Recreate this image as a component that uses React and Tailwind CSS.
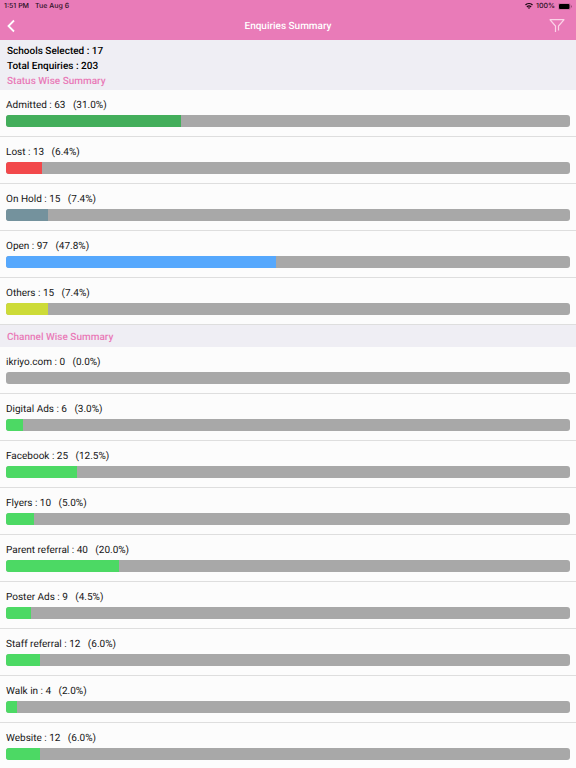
const statuses = [
  { name: 'Admitted', count: 63, percent: '31.0', color: 'bg-[#43ae5b]' },
  { name: 'Lost', count: 13, percent: '6.4', color: 'bg-[#f2484b]' },
  { name: 'On Hold', count: 15, percent: '7.4', color: 'bg-[#74929d]' },
  { name: 'Open', count: 97, percent: '47.8', color: 'bg-[#56a8fd]' },
  { name: 'Others', count: 15, percent: '7.4', color: 'bg-[#cddb38]' },
];

const channels = [
  { name: 'ikriyo.com', count: 0, percent: '0.0' },
  { name: 'Digital Ads', count: 6, percent: '3.0' },
  { name: 'Facebook', count: 25, percent: '12.5' },
  { name: 'Flyers', count: 10, percent: '5.0' },
  { name: 'Parent referral', count: 40, percent: '20.0' },
  { name: 'Poster Ads', count: 9, percent: '4.5' },
  { name: 'Staff referral', count: 12, percent: '6.0' },
  { name: 'Walk in', count: 4, percent: '2.0' },
  { name: 'Website', count: 12, percent: '6.0' },
];

function StatusBar() {
  return (
    <div className="flex h-3 items-center justify-between px-1 font-['Inter',sans-serif] text-[7px] font-medium text-[#2a101e]">
      <div className="flex gap-1.5">
        <span>1:51 PM</span>
        <span>Tue Aug 6</span>
      </div>
      <div className="flex items-center gap-[3px]">
        <svg className="h-[6px] w-2" viewBox="0 0 16 12" fill="none" stroke="#1d0b15" strokeWidth="2.8" aria-hidden="true">
          <path d="M1 4.2a10 10 0 0 1 14 0" />
          <path d="M3.8 7.8a6 6 0 0 1 8.4 0" />
          <path d="M8 12 5.6 9.6a3.4 3.4 0 0 1 4.8 0z" fill="#1d0b15" stroke="none" />
        </svg>
        <span>100%</span>
        <svg className="h-[7px] w-[14px]" viewBox="0 0 28 14" aria-hidden="true">
          <rect x="0.5" y="0.5" width="24" height="13" rx="3.5" fill="none" stroke="#a85a85" />
          <rect x="2" y="2" width="21" height="10" rx="2" fill="#000" />
          <path d="M26 4.5c2 .8 2 4.2 0 5z" fill="#7a3c5d" />
        </svg>
      </div>
    </div>
  );
}

function Row({ name, count, percent, color = 'bg-[#4cd964]' }) {
  return (
    <li className="border-b border-[#dedede] px-1.5 pt-[7px] pb-[9px]">
      <p className="text-[10px] leading-[18px] whitespace-pre">{`${name} : ${count}   (${percent}%)`}</p>
      <div className="h-3 overflow-hidden rounded-[3px] bg-[#a8a8a8]">
        <div className={`h-full ${color}`} style={{ width: `${percent}%` }} />
      </div>
    </li>
  );
}

export default function App() {
  return (
    <div className="h-screen overflow-hidden bg-[#fcfcfc] font-['Roboto',sans-serif] text-[#161616] [text-rendering:geometricPrecision]">
      <header className="bg-[#e97bb8]">
        <StatusBar />
        <div className="grid h-7 grid-cols-[1fr_auto_1fr] items-center px-1.5">
          <button type="button" aria-label="Back" className="justify-self-start">
            <svg className="h-[14px] w-[10px]" viewBox="0 0 10 14" fill="none" stroke="#fff" strokeWidth="1.8" aria-hidden="true">
              <path d="M8 1.5 2.5 7 8 12.5" />
            </svg>
          </button>
          <h1 className="text-[10px] font-medium text-white">Enquiries Summary</h1>
          <button type="button" aria-label="Filter" className="mr-[5px] justify-self-end">
            <svg className="h-[15px] w-4" viewBox="0 0 16 15" fill="none" stroke="#fbd3e8" strokeWidth="1.2" aria-hidden="true">
              <path d="M6.5 13V7L1.2 1V.6h13.6V1L9.5 7v4.5" />
            </svg>
          </button>
        </div>
      </header>
      <main>
        <section className="bg-[#efeef4] px-[7px] pt-1 pb-px text-[10px] leading-[15px] font-medium text-black">
          <p>Schools Selected : 17</p>
          <p>Total Enquiries : 203</p>
          <h2 className="text-[#e97bb8]">Status Wise Summary</h2>
        </section>
        <ul>
          {statuses.map((item) => (
            <Row key={item.name} {...item} />
          ))}
        </ul>
        <h2 className="bg-[#efeef4] px-[7px] pt-[5px] pb-0.5 text-[10px] leading-[15px] font-medium text-[#e97bb8]">Channel Wise Summary</h2>
        <ul>
          {channels.map((item) => (
            <Row key={item.name} {...item} />
          ))}
        </ul>
      </main>
    </div>
  );
}
